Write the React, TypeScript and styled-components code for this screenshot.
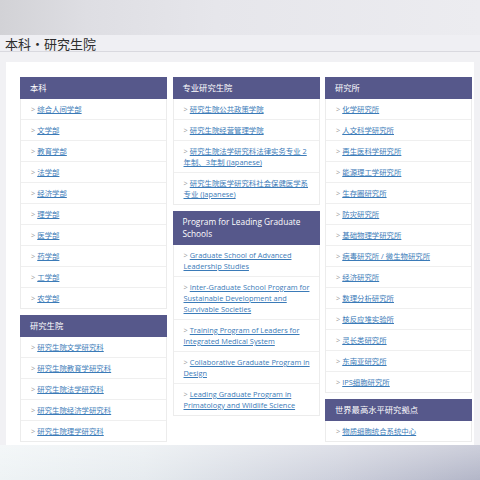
import React from "react";
import styled, { createGlobalStyle } from "styled-components";

const GlobalStyle = createGlobalStyle`
  html, body {
    margin: 0;
    padding: 0;
    background: #f0f0f3;
  }
  body {
    font-family: "Open Sans", "Noto Sans CJK SC", sans-serif;
  }
`;

type Group = { title: string; items: string[] };

const colOne: Group[] = [
  {
    title: "本科",
    items: [
      "综合人间学部",
      "文学部",
      "教育学部",
      "法学部",
      "经济学部",
      "理学部",
      "医学部",
      "药学部",
      "工学部",
      "农学部",
    ],
  },
  {
    title: "研究生院",
    items: [
      "研究生院文学研究科",
      "研究生院教育学研究科",
      "研究生院法学研究科",
      "研究生院经济学研究科",
      "研究生院理学研究科",
    ],
  },
];

const colTwo: Group[] = [
  {
    title: "专业研究生院",
    items: [
      "研究生院公共政策学院",
      "研究生院经营管理学院",
      "研究生院法学研究科法律实务专业 2年制、3年制 (Japanese)",
      "研究生院医学研究科社会保健医学系专业 (Japanese)",
    ],
  },
  {
    title: "Program for Leading Graduate Schools",
    items: [
      "Graduate School of Advanced Leadership Studies",
      "Inter-Graduate School Program for Sustainable Development and Survivable Societies",
      "Training Program of Leaders for Integrated Medical System",
      "Collaborative Graduate Program in Design",
      "Leading Graduate Program in Primatology and Wildlife Science",
    ],
  },
];

const colThree: Group[] = [
  {
    title: "研究所",
    items: [
      "化学研究所",
      "人文科学研究所",
      "再生医科学研究所",
      "能源理工学研究所",
      "生存圈研究所",
      "防灾研究所",
      "基础物理学研究所",
      "病毒研究所 / 微生物研究所",
      "经济研究所",
      "数理分析研究所",
      "核反应堆实验所",
      "灵长类研究所",
      "东南亚研究所",
      "IPS细胞研究所",
    ],
  },
  {
    title: "世界最高水平研究拠点",
    items: ["物质细胞统合系统中心"],
  },
];

const Page = styled.div`
  width: 480px;
  height: 480px;
  display: flex;
  flex-direction: column;
  overflow: hidden;
`;

const TopBand = styled.div`
  height: 35px;
  background: linear-gradient(90deg, #d2d2d6 0%, #dedee3 18%, #e6e6eb 45%, #ececf0 100%);
`;

const TitleBar = styled.div`
  height: 17px;
  box-sizing: border-box;
  padding-left: 5px;
  background: #efeff3;
  border-bottom: 1px solid #d9d9df;
  color: #2d2d2d;
  font-family: "Noto Sans CJK SC", sans-serif;
  font-size: 13px;
  line-height: 17px;
`;

const Main = styled.div`
  padding: 10px 6px 0 6px;
  background: #f1f1f4;
`;

const Panel = styled.div`
  height: 383px;
  box-sizing: border-box;
  background: #ffffff;
  padding: 15px 2px 0 14px;
  display: grid;
  grid-template-columns: 147px 147px 147px;
  column-gap: 5.5px;
  align-items: start;
`;

const Column = styled.div`
  display: flex;
  flex-direction: column;
  gap: 6px;
`;

const Box = styled.div`
  background: #fff;
  border: 1px solid #ececec;
  border-top: none;
`;

const Header = styled.div`
  background: #56588b;
  color: #ffffff;
  font-family: "Open Sans", "Noto Sans CJK SC", sans-serif;
  font-size: 8.3px;
  line-height: 12px;
  padding: 5px 8px 5px 10px;
  margin: 0 -1px;
`;

const Row = styled.div`
  padding: 5px 5px 4px 10px;
  border-bottom: 1px solid #efefef;
  font-size: 7.4px;
  line-height: 11px;
  &:last-child {
    border-bottom: none;
  }
`;

const Link = styled.a`
  color: #3b7bb8;
  text-decoration: underline;
  text-underline-offset: 1px;

  &::before {
    content: ">";
    display: inline-block;
    color: #9a9a9a;
    margin-right: 2px;
    text-decoration: none;
  }
`;

const BottomBand = styled.div`
  flex: 1;
  background:
    linear-gradient(180deg, rgba(255, 255, 255, 0.35) 0%, rgba(255, 255, 255, 0) 100%),
    linear-gradient(90deg, #eef3f5 0%, #e6ebef 30%, #cdd0dc 70%, #b3b6c8 100%);
`;

const GroupBox: React.FC<{ group: Group }> = ({ group }) => (
  <Box>
    <Header>{group.title}</Header>
    {group.items.map((label) => (
      <Row key={label}>
        <Link href="#">{label}</Link>
      </Row>
    ))}
  </Box>
);

const App: React.FC = () => {
  const columns = [colOne, colTwo, colThree];
  return (
    <Page>
      <GlobalStyle />
      <TopBand />
      <TitleBar>本科・研究生院</TitleBar>
      <Main>
        <Panel>
          {columns.map((groups, i) => (
            <Column key={i}>
              {groups.map((g) => (
                <GroupBox key={g.title} group={g} />
              ))}
            </Column>
          ))}
        </Panel>
      </Main>
      <BottomBand />
    </Page>
  );
};

export default App;
